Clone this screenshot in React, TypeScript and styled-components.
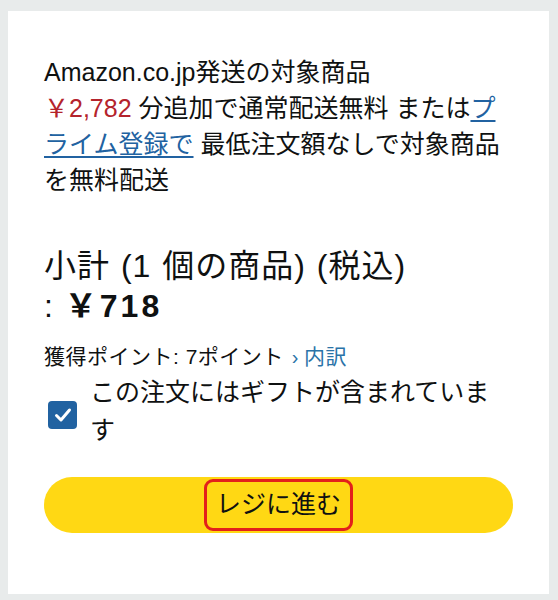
import React from 'react';
import styled, { createGlobalStyle } from 'styled-components';

const GlobalStyle = createGlobalStyle`
  html, body {
    margin: 0;
    padding: 0;
    background: #e8ebeb;
  }
  body {
    font-family: "Liberation Sans", "Noto Sans CJK JP", sans-serif;
    color: #0f1111;
  }
`;

// Gray page around the card
const Page = styled.div`
  width: 558px;
  height: 600px;
  box-sizing: border-box;
  padding: 11px 9px 6px 8px;
  display: flex;
`;

// White summary card
const Card = styled.div`
  flex: 1;
  background: #ffffff;
  box-sizing: border-box;
  padding: 43px 36px 0 36px;
  display: flex;
  flex-direction: column;
`;

// Free shipping message
const ShippingNote = styled.p`
  margin: 0;
  font-size: 25px;
  line-height: 36px;
`;

const Price = styled.span`
  color: #b4232c;
`;

const Link = styled.a`
  color: #2162a1;
  text-decoration: underline;
  text-underline-offset: 3px;
`;

// Subtotal block
const Subtotal = styled.div`
  margin-top: 48px;
  font-size: 32px;
  line-height: 40px;
  letter-spacing: 1px;
  word-spacing: 1px;
`;

const Amount = styled.span`
  font-weight: 700;
  font-size: 32px;
  letter-spacing: 3px;
  word-spacing: 0;
`;

const Points = styled.div`
  margin-top: 17px;
  font-size: 21px;
  line-height: 28px;
  letter-spacing: 0.5px;
`;

const PointsLink = styled.a`
  color: #2a73a8;
  text-decoration: none;
  margin-left: 8px;
`;

const Chevron = styled.span`
  font-size: 20px;
  margin-right: 5px;
`;

// Gift checkbox row
const GiftRow = styled.label`
  margin-top: 2px;
  display: flex;
  align-items: flex-start;
  gap: 13px;
  padding-left: 4px;
`;

const Box = styled.span`
  flex: none;
  width: 29px;
  height: 28px;
  margin-top: 28px;
  border-radius: 4px;
  background: #2162a1;
  display: flex;
  align-items: center;
  justify-content: center;
`;

const GiftText = styled.span`
  font-size: 25px;
  line-height: 38px;
`;

// Yellow checkout button
const CheckoutButton = styled.button`
  margin-top: 28px;
  height: 56px;
  width: 100%;
  border: none;
  border-radius: 28px;
  background: #ffd814;
  display: flex;
  align-items: center;
  justify-content: center;
  font-family: inherit;
  color: #0f1111;
  padding: 0;
`;

// Red annotation frame around the button label
const Highlight = styled.span`
  border: 3px solid #e3201b;
  border-radius: 9px;
  padding: 7px 9px 8px;
  font-size: 25px;
  line-height: 31px;
`;

const App = (): JSX.Element => (
  <>
    <GlobalStyle />
    <Page>
      <Card>
        <ShippingNote>
          Amazon.co.jp発送の対象商品
          <br />
          <Price>￥2,782</Price> 分追加で通常配送無料 または<Link>プライム登録で</Link> 最低注文額なしで対象商品を無料配送
        </ShippingNote>

        <Subtotal>
          小計 (1 個の商品) (税込)
          <br />
          : <Amount>￥718</Amount>
        </Subtotal>

        <Points>
          獲得ポイント: 7ポイント
          <PointsLink>
            <Chevron>›</Chevron>内訳
          </PointsLink>
        </Points>

        <GiftRow>
          <Box>
            <svg width="18" height="16" viewBox="0 0 18 16">
              <path d="M2.5 8.5 L7 13 L15.5 3" fill="none" stroke="#ffffff" strokeWidth="3" strokeLinecap="round" strokeLinejoin="round" />
            </svg>
          </Box>
          <GiftText>この注文にはギフトが含まれています</GiftText>
        </GiftRow>

        <CheckoutButton>
          <Highlight>レジに進む</Highlight>
        </CheckoutButton>
      </Card>
    </Page>
  </>
);

export default App;
